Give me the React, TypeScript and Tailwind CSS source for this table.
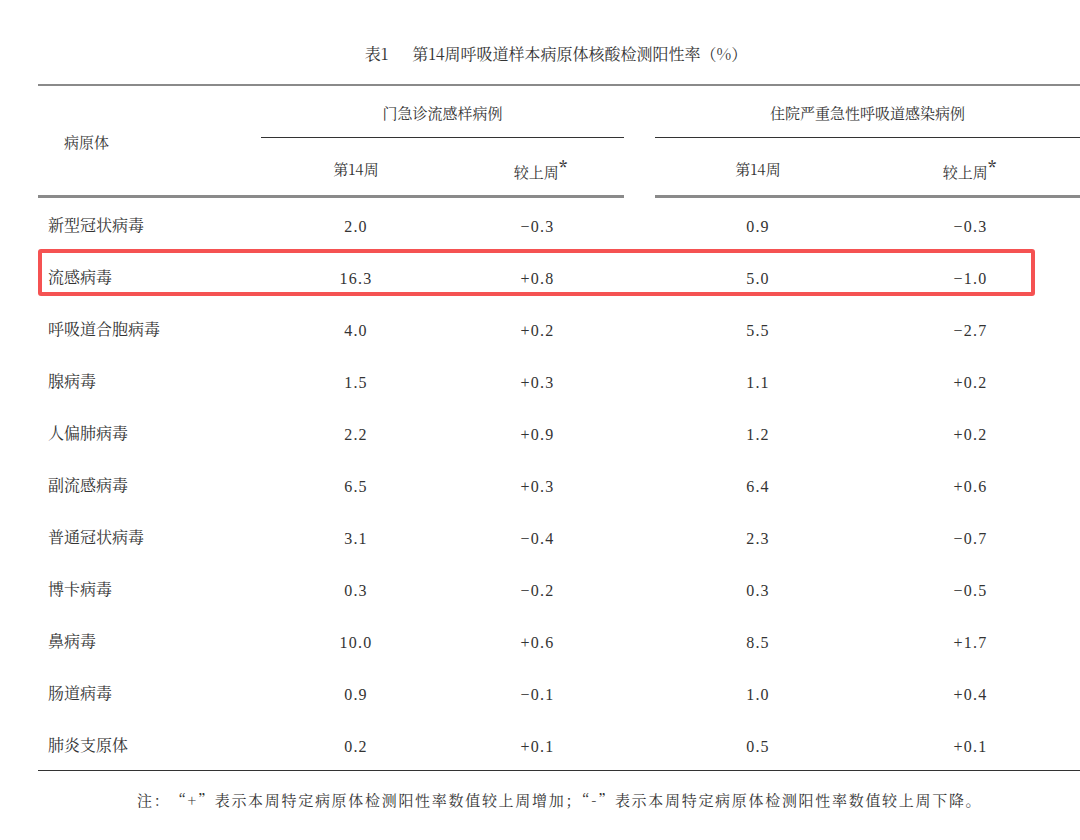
const rows = [
  { name: '新型冠状病毒', a: '2.0', b: '−0.3', c: '0.9', d: '−0.3' },
  { name: '流感病毒', a: '16.3', b: '+0.8', c: '5.0', d: '−1.0' },
  { name: '呼吸道合胞病毒', a: '4.0', b: '+0.2', c: '5.5', d: '−2.7' },
  { name: '腺病毒', a: '1.5', b: '+0.3', c: '1.1', d: '+0.2' },
  { name: '人偏肺病毒', a: '2.2', b: '+0.9', c: '1.2', d: '+0.2' },
  { name: '副流感病毒', a: '6.5', b: '+0.3', c: '6.4', d: '+0.6' },
  { name: '普通冠状病毒', a: '3.1', b: '−0.4', c: '2.3', d: '−0.7' },
  { name: '博卡病毒', a: '0.3', b: '−0.2', c: '0.3', d: '−0.5' },
  { name: '鼻病毒', a: '10.0', b: '+0.6', c: '8.5', d: '+1.7' },
  { name: '肠道病毒', a: '0.9', b: '−0.1', c: '1.0', d: '+0.4' },
  { name: '肺炎支原体', a: '0.2', b: '+0.1', c: '0.5', d: '+0.1' },
];

const serif = "font-['Noto_Serif_CJK_SC','Liberation_Serif','Noto_Sans_CJK_SC',serif]";
const num = "font-['Liberation_Serif','Noto_Sans_CJK_SC',serif] text-[16px] tracking-[1.2px]";
const cols = 'grid grid-cols-[223px_190px_173px_31px_206px_219px]';

function Num({ v }: { v: string }) {
  return <div className={`flex items-center justify-center pt-[3px] ${num}`}>{v}</div>;
}

function Prev() {
  return (
    <span>
      较上周<span className="relative top-[-4px] text-[17px] font-bold">*</span>
    </span>
  );
}

export default function App() {
  return (
    <div className={`w-[1080px] h-[840px] bg-white text-[#333] ${serif}`}>
      <div className="pt-[43px] pb-[19px] flex justify-center gap-[24px] text-[16px] leading-[22px] pl-[32px]">
        <span>表1</span>
        <span>第14周呼吸道样本病原体核酸检测阳性率（%）</span>
      </div>

      <div className="ml-[38px] relative">
        <div className="h-[2px] bg-[#8a8a8a]" />

        {/* header */}
        <div className={`${cols} text-[15px]`}>
          <div className="row-span-2 flex items-center pl-[26px] pt-[4px]">病原体</div>
          <div className="col-span-2 h-[52px] flex items-center justify-center pt-[4px] border-b border-[#333]">
            门急诊流感样病例
          </div>
          <div />
          <div className="col-span-2 h-[52px] flex items-center justify-center pt-[4px] border-b border-[#333]">
            住院严重急性呼吸道感染病例
          </div>
          <div className="h-[57px] flex items-center justify-center pt-[6px]">第14周</div>
          <div className="h-[57px] flex items-center justify-center pt-[9px] pl-[6px]">
            <Prev />
          </div>
          <div />
          <div className="h-[57px] flex items-center justify-center pt-[6px]">第14周</div>
          <div className="h-[57px] flex items-center justify-center pt-[9px] pr-[2px]">
            <Prev />
          </div>
        </div>

        <div className={cols}>
          <div className="col-span-3 h-[3px] bg-[#8a8a8a]" />
          <div />
          <div className="col-span-2 h-[3px] bg-[#8a8a8a]" />
        </div>

        {/* body */}
        <div className="pt-[1px]">
          {rows.map((r) => (
            <div key={r.name} className={`${cols} h-[52px]`}>
              <div className="flex items-center pl-[10px] text-[16px]">{r.name}</div>
              <Num v={r.a} />
              <Num v={r.b} />
              <div />
              <Num v={r.c} />
              <Num v={r.d} />
            </div>
          ))}
        </div>

        <div className="h-[1px] bg-[#333] mt-[-1px]" />

        {/* highlight */}
        <div className="absolute left-0 top-[165px] w-[997px] h-[47px] border-[4px] border-[#f55252] rounded-[3px]" />
      </div>

      <div className="pt-[18px] pl-[137px] text-[15px] tracking-[1.7px]">
        <span className="mr-[8px]">注：</span>
        “+”表示本周特定病原体检测阳性率数值较上周增加；“-”表示本周特定病原体检测阳性率数值较上周下降。
      </div>
    </div>
  );
}
